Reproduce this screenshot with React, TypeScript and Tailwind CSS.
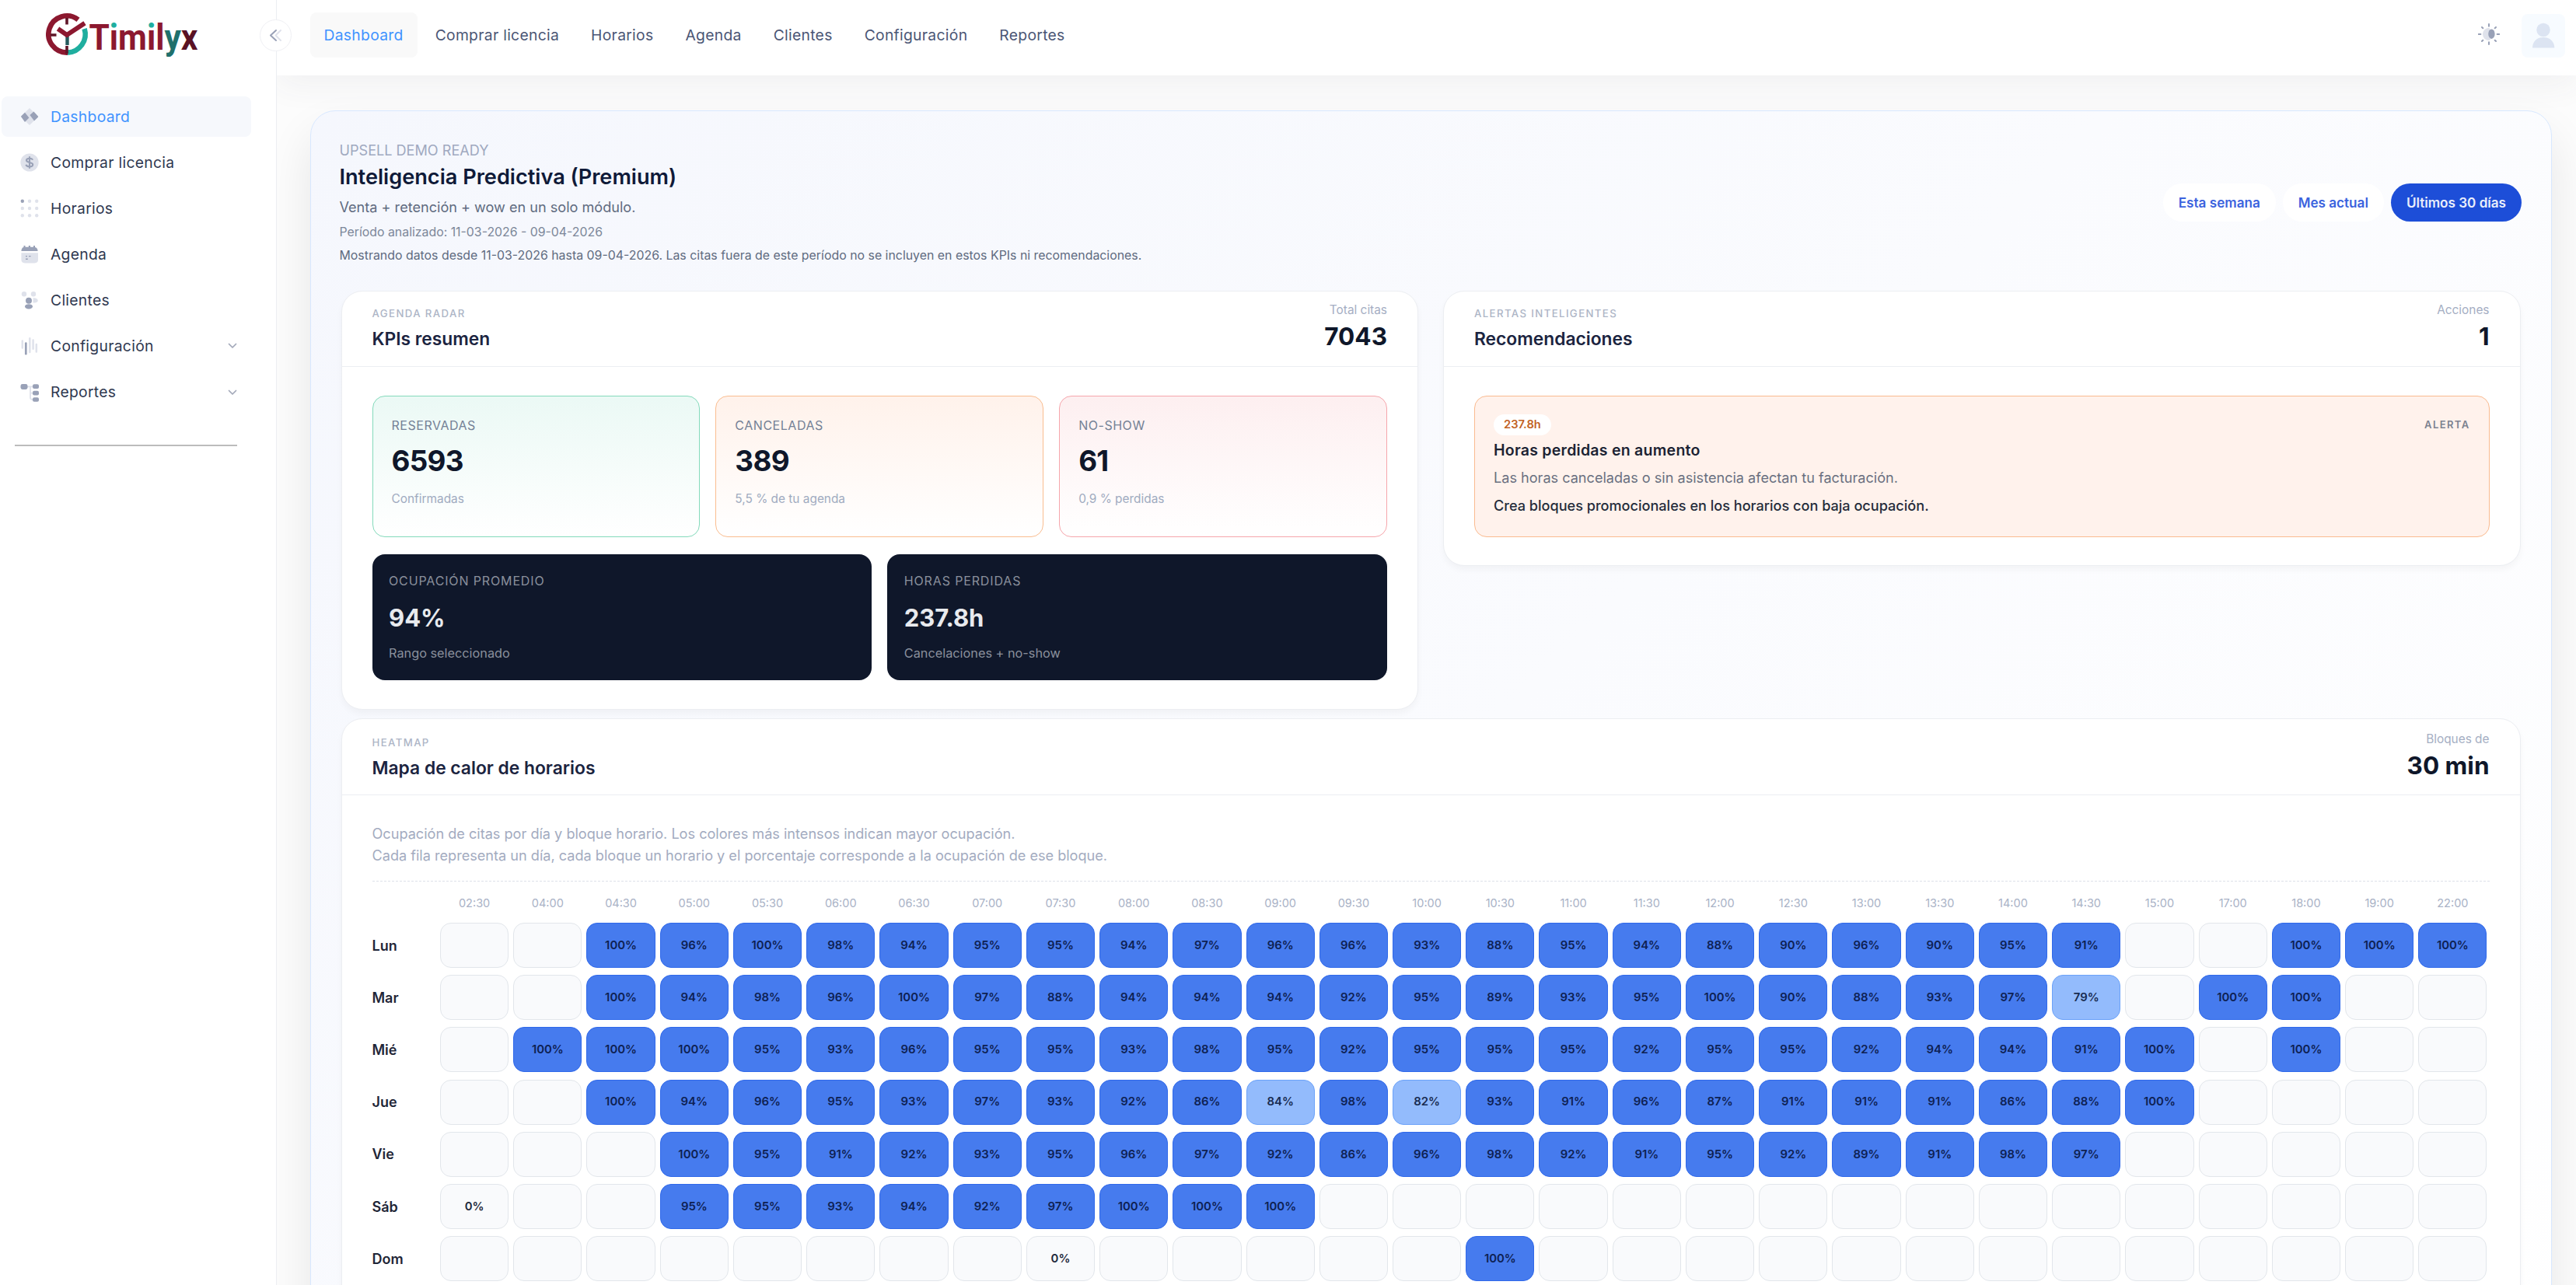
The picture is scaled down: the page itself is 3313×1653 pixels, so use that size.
import { ReactNode } from "react";
import clsx from "clsx";

const topNav = ["Dashboard", "Comprar licencia", "Horarios", "Agenda", "Clientes", "Configuración", "Reportes"];

const hours = [
  "02:30", "04:00", "04:30", "05:00", "05:30", "06:00", "06:30", "07:00", "07:30", "08:00",
  "08:30", "09:00", "09:30", "10:00", "10:30", "11:00", "11:30", "12:00", "12:30", "13:00",
  "13:30", "14:00", "14:30", "15:00", "17:00", "18:00", "19:00", "22:00",
];

// One entry per column in `hours`, null when there are no blocks that day
const _ = null;
const week: { day: string; values: (number | null)[] }[] = [
  { day: "Lun", values: [_, _, 100, 96, 100, 98, 94, 95, 95, 94, 97, 96, 96, 93, 88, 95, 94, 88, 90, 96, 90, 95, 91, _, _, 100, 100, 100] },
  { day: "Mar", values: [_, _, 100, 94, 98, 96, 100, 97, 88, 94, 94, 94, 92, 95, 89, 93, 95, 100, 90, 88, 93, 97, 79, _, 100, 100, _, _] },
  { day: "Mié", values: [_, 100, 100, 100, 95, 93, 96, 95, 95, 93, 98, 95, 92, 95, 95, 95, 92, 95, 95, 92, 94, 94, 91, 100, _, 100, _, _] },
  { day: "Jue", values: [_, _, 100, 94, 96, 95, 93, 97, 93, 92, 86, 84, 98, 82, 93, 91, 96, 87, 91, 91, 91, 86, 88, 100, _, _, _, _] },
  { day: "Vie", values: [_, _, _, 100, 95, 91, 92, 93, 95, 96, 97, 92, 86, 96, 98, 92, 91, 95, 92, 89, 91, 98, 97, _, _, _, _, _] },
  { day: "Sáb", values: [0, _, _, 95, 95, 93, 94, 92, 97, 100, 100, 100, _, _, _, _, _, _, _, _, _, _, _, _, _, _, _, _] },
  { day: "Dom", values: [_, _, _, _, _, _, _, _, 0, _, _, _, _, _, 100, _, _, _, _, _, _, _, _, _, _, _, _, _] },
];

const DARK = "#99a1b7";
const LIGHT = "#dfe2eb";

function Icon({ children }: { children: ReactNode }) {
  return (
    <svg viewBox="-12 -12 24 24" className="size-6 shrink-0">
      {children}
    </svg>
  );
}

const sideNav: { label: string; icon: ReactNode; expandable?: boolean }[] = [
  {
    label: "Dashboard",
    icon: (
      <Icon>
        <path d="M0 -11L11.3 0L0 11L-11.3 0Z" fill={LIGHT} />
        <path d="M-10.6 .6Q-11.3 0 -10.6 -.8L-6 -5.3L-.6 1.6L-6 7L-10.6 .6Z" fill={DARK} />
        <path d="M.4 -2L5.4 -6.6L10.9 -.6Q11.4 0 10.9 .7L6 5.6Z" fill={DARK} />
      </Icon>
    ),
  },
  {
    label: "Comprar licencia",
    icon: (
      <Icon>
        <circle r="11.6" fill={LIGHT} />
        <path d="M4 -3.2C3.6 -4.8 2 -5.3 0 -5.3C-2.4 -5.3 -4 -4.3 -4 -2.7C-4 .6 4.2 -.8 4.2 2.7C4.2 4.4 2.4 5.3 0 5.3C-2.4 5.3 -4.2 4.5 -4.5 2.8M0 -7.8V7.8" fill="none" stroke={DARK} strokeWidth="2.1" />
      </Icon>
    ),
  },
  {
    label: "Horarios",
    icon: (
      <Icon>
        {[-9.2, 0, 9.2].map((y) =>
          [-9.2, 0, 9.2].map((x) => (
            <circle key={`${x}${y}`} cx={x} cy={y} r="2.2" fill={x < 0 && y < 0 ? DARK : LIGHT} />
          ))
        )}
      </Icon>
    ),
  },
  {
    label: "Agenda",
    icon: (
      <Icon>
        <path d="M-10.6 -1.8H11V7Q11 11.4 6.5 11.4H-6Q-10.6 11.4 -10.6 7Z" fill={LIGHT} />
        <path d="M-10.6 -4C-10.6 -7 -9 -9 -7.5 -9V-11H-5.5V-9.3H-1.2V-11H1V-9.3H5V-11H7V-9C9 -8.6 10.6 -7 10.6 -4Z" fill={DARK} />
        <path d="M-5 2.6H-3M-1 2.6H1.6M-5 6.2H-2.2" stroke={DARK} strokeWidth="1.4" />
      </Icon>
    ),
  },
  {
    label: "Clientes",
    icon: (
      <Icon>
        <circle cx="-7" cy="-7.7" r="3.2" fill={LIGHT} />
        <circle cx="5" cy="-7.7" r="3.2" fill={LIGHT} />
        <path d="M4.5 -2.6C8 -3 10.6 -1.6 10.8 .8C10.4 3 8 4 4.5 3.4Z" fill={LIGHT} />
        <circle cx="-1" cy=".7" r="4" fill={DARK} />
        <ellipse cx="-1" cy="8.3" rx="5" ry="3.1" fill={DARK} />
      </Icon>
    ),
  },
  {
    label: "Configuración",
    expandable: true,
    icon: (
      <Icon>
        <path d="M-9.2 -6.5V2.5M.3 -9.8V8M4.6 -7.6V3.8M8.8 -2V7.5" stroke={LIGHT} strokeWidth="2.5" strokeLinecap="round" />
        <path d="M-4.7 -3.4V10.2" stroke={DARK} strokeWidth="2.7" strokeLinecap="round" />
      </Icon>
    ),
  },
  {
    label: "Reportes",
    expandable: true,
    icon: (
      <Icon>
        <path d="M-3 -7.6H5M1 -7.6V6.5Q1 9 4 9M1 .7H5" fill="none" stroke={LIGHT} strokeWidth="1.8" />
        <rect x="-11.5" y="-11" width="9" height="7" rx="2.4" fill={DARK} />
        <rect x="4" y="-10.8" width="8" height="5.8" rx="2" fill={DARK} />
        <rect x="4" y="-2.2" width="8" height="5.8" rx="2" fill={DARK} />
        <rect x="4" y="6.2" width="8" height="5.6" rx="2" fill={DARK} />
      </Icon>
    ),
  },
];

function Logo() {
  return (
    <svg viewBox="0 0 200 62" className="h-[62px] w-[200px]">
      <defs>
        <linearGradient id="dot" gradientUnits="userSpaceOnUse" x1="0" y1="0" x2="0" y2="62">
          <stop offset="0.36" stopColor="#1fae9f" />
          <stop offset="0.36" stopColor="#8c182f" />
        </linearGradient>
      </defs>
      <path d="M28 52.600A23.600 23.600 0 1 1 41.500 10.400" fill="none" stroke="#8c182f" strokeWidth="6.6" />
      <path d="M49.600 22A23.600 23.600 0 0 1 28 52.600" fill="none" stroke="#1fae9f" strokeWidth="6.6" />
      <path d="M27 8V16.500M6 30H13.500M27 44V54" stroke="#5f1628" strokeWidth="3.6" />
      <path d="M27.500 31V43" stroke="#245a5c" strokeWidth="4.4" />
      <path d="M15.500 22L27 30L50 14.800" fill="none" stroke="#8c182f" strokeWidth="6" />
      <text x="55.500" y="49" textLength="140" lengthAdjust="spacingAndGlyphs" fontFamily="Roboto" fontWeight="700" fontSize="46.800" fill="#8c182f">
        T<tspan fill="url(#dot)">i</tspan>m<tspan fill="url(#dot)">i</tspan>l<tspan fill="#1f706c">y</tspan><tspan fill="#5a1224">x</tspan>
      </text>
    </svg>
  );
}

function Sidebar() {
  return (
    <aside className="relative z-20 flex w-[356px] shrink-0 flex-col border-r border-[#eceef2] bg-white">
      <div className="flex h-[124px] pt-[15px] pl-[59px]">
        <Logo />
      </div>
      <button className="absolute top-[25px] right-[-20px] flex size-[41px] items-center justify-center rounded-full border border-[#eff0f4] bg-white">
        <svg viewBox="0 0 20 20" className="size-5" fill="none" strokeWidth="2" strokeLinecap="round" strokeLinejoin="round">
          <path d="M16 3L9.500 9.500L16 16" stroke="#dfe2eb" />
          <path d="M10 3L3 9.500L10 16" stroke={DARK} />
        </svg>
      </button>
      <nav className="flex flex-col gap-[7.100px] pl-[2px]">
        {sideNav.map((item, i) => (
          <a
            key={item.label}
            className={clsx(
              "flex h-[52px] w-[321px] items-center rounded-lg pl-[24px] text-[19.300px] tracking-[0.300px]",
              i === 0 ? "bg-[#f6f8fc] text-[#3f93ff]" : "text-[#2f3850]"
            )}
          >
            {item.icon}
            <span className="ml-[15px]">{item.label}</span>
            {item.expandable && (
              <svg viewBox="0 0 12 8" className="mr-[18px] ml-auto h-2 w-3" fill="none" stroke="#a2a8b9" strokeWidth="1.700" strokeLinecap="round" strokeLinejoin="round">
                <path d="M1.500 1.500L6 6L10.500 1.500" />
              </svg>
            )}
          </a>
        ))}
      </nav>
      <div className="mt-[41px] ml-[19px] h-[2px] w-[286px] bg-[#bcbcbc]" />
    </aside>
  );
}

function Topbar() {
  return (
    <header className="relative z-10 flex h-[97px] shrink-0 items-start bg-white pl-[42.500px] shadow-[0_13px_40px_rgba(70,60,90,0.06)]">
      <nav className="flex gap-[5px] pt-[16px]">
        {topNav.map((label, i) => (
          <a
            key={label}
            className={clsx(
              "flex h-[58px] items-center rounded-lg px-[18px] text-[19.300px] tracking-[0.300px]",
              i === 0 ? "bg-[#f9f9f9] text-[#3f93ff]" : "text-[#4b5675]"
            )}
          >
            {label}
          </a>
        ))}
      </nav>
      <div className="mr-[14px] ml-auto flex pt-[18px]">
        <svg viewBox="-14 -14 28 28" className="mt-[12px] mr-[28px] size-7">
          <path d="M0 -8A8 8 0 1 0 0 8Q3 7 3 0Q3 -7 0 -8Z" fill={LIGHT} />
          <ellipse cx="3.400" cy="-.3" rx="4.200" ry="6.200" fill={DARK} />
          <path d="M0 -13V-10.300M0 10.300V13M-13.400 0H-10.600M10.600 0H13.400M-9 -9L-7.700 -7.700M7.700 -7.700L9 -9M-9 9L-7.700 7.700M7.700 7.700L9 9" stroke={DARK} strokeWidth="2" strokeLinecap="round" />
        </svg>
        <div className="flex size-[56px] items-center justify-center rounded-lg bg-[#f7fbff]">
          <svg viewBox="0 0 56 56" className="size-14" fill="#dce4f2">
            <circle cx="28" cy="20.500" r="8.700" />
            <path d="M14 43.500C14 36 19 30 28 30S42.300 36 42.300 43.500Z" />
          </svg>
        </div>
      </div>
    </header>
  );
}

interface CardProps {
  eyebrow: string;
  title: string;
  metaLabel: string;
  metaValue: string;
  className?: string;
  headerClassName?: string;
  children: ReactNode;
}

function Card({ eyebrow, title, metaLabel, metaValue, className, headerClassName = "h-[97px]", children }: CardProps) {
  return (
    <section className={clsx("rounded-[27px] border border-[#eceef2] bg-white shadow-[0_5px_8px_rgba(15,23,42,0.035)]", className)}>
      <div className={clsx("flex justify-between border-b border-[#eceef2] px-[39px]", headerClassName)}>
        <div className="pt-[18px]">
          <p className="text-[13.200px] leading-[20px] font-medium tracking-[1.400px] text-[#adb5c6] uppercase">{eyebrow}</p>
          <h3 className="text-[22.800px] leading-[45px] font-semibold text-[#1b2440]">{title}</h3>
        </div>
        <div className="pt-[12px] text-right">
          <p className="text-[15.400px] leading-[24px] text-[#a5aec3]">{metaLabel}</p>
          <p className="text-[31.500px] leading-[44px] font-bold text-[#0f172a]">{metaValue}</p>
        </div>
      </div>
      {children}
    </section>
  );
}

const kpis = [
  { label: "Reservadas", value: "6593", hint: "Confirmadas", tone: "border-[#84dabb] from-[#ebf9f5]" },
  { label: "Canceladas", value: "389", hint: "5,5 % de tu agenda", tone: "border-[#fabd90] from-[#fff2eb]" },
  { label: "No-show", value: "61", hint: "0,9 % perdidas", tone: "border-[#f6a6ac] from-[#fdeff0]" },
];

const totals = [
  { label: "Ocupación promedio", value: "94%", hint: "Rango seleccionado" },
  { label: "Horas perdidas", value: "237.8h", hint: "Cancelaciones + no-show" },
];

function KpiCard() {
  return (
    <Card eyebrow="Agenda radar" title="KPIs resumen" metaLabel="Total citas" metaValue="7043" className="h-[539px]">
      <div className="px-[39px] pt-[37px]">
        <div className="grid grid-cols-3 gap-[20px]">
          {kpis.map((k) => (
            <div key={k.label} className={clsx("h-[182px] rounded-2xl border bg-linear-to-b to-white px-[24px] pt-[24px]", k.tone)}>
              <p className="text-[16px] leading-[26px] tracking-[0.530px] text-[#748196] uppercase">{k.label}</p>
              <p className="text-[36.800px] leading-[66px] font-bold tracking-[-0.700px] text-[#0f172a]">{k.value}</p>
              <p className="text-[15.400px] leading-[31px] text-[#a0abc0]">{k.hint}</p>
            </div>
          ))}
        </div>
        <div className="mt-[22px] grid grid-cols-2 gap-[20px]">
          {totals.map((t) => (
            <div key={t.label} className="h-[162px] rounded-2xl bg-[#0f172a] px-[21.500px] pt-[21px]">
              <p className="text-[16px] leading-[26px] tracking-[0.860px] text-[#8a909c] uppercase">{t.label}</p>
              <p className="text-[31px] leading-[69px] font-bold text-[#e8eaee]">{t.value}</p>
              <p className="text-[16.300px] leading-[22px] text-[#8a909c]">{t.hint}</p>
            </div>
          ))}
        </div>
      </div>
    </Card>
  );
}

function AlertsCard() {
  return (
    <Card eyebrow="Alertas inteligentes" title="Recomendaciones" metaLabel="Acciones" metaValue="1" className="h-[354px]">
      <div className="px-[39px] pt-[37px]">
        <div className="h-[182px] rounded-2xl border border-[#fabb90] bg-[#fff2ec] px-[24px] pt-[23px]">
          <div className="flex items-center justify-between">
            <span className="flex h-[27px] items-center rounded-full bg-white px-[13px] text-[14.700px] font-semibold text-[#c2621f]">
              237.8h
            </span>
            <span className="text-[13px] font-semibold tracking-[1.400px] text-[#7c8290] uppercase">Alerta</span>
          </div>
          <p className="text-[19.500px] leading-[39px] font-semibold tracking-[0.260px] text-[#1c2333]">Horas perdidas en aumento</p>
          <p className="text-[18.100px] leading-[30px] text-[#6a7080]">Las horas canceladas o sin asistencia afectan tu facturación.</p>
          <p className="text-[18.100px] leading-[43px] font-medium text-[#252c3b]">Crea bloques promocionales en los horarios con baja ocupación.</p>
        </div>
      </div>
    </Card>
  );
}

function cellTone(value: number | null) {
  if (value === null || value === 0) return "border-[#e2e6eb] bg-[#f9fafc] text-[#1e293b]";
  if (value < 85) return "border-[#6ba2f9] bg-[#93bbfc] text-[#182b50]";
  return "border-[#3069ea] bg-[#467bee] text-[#0e2152]";
}

function HeatmapCard() {
  return (
    <Card eyebrow="Heatmap" title="Mapa de calor de horarios" metaLabel="Bloques de" metaValue="30 min" className="mt-[10.500px] h-[900px]" headerClassName="h-[98px] pt-[2.500px]">
      <div className="px-[39px] pt-[35px]">
        <div className="border-b border-dashed border-[#dde1e8] pb-[19px] text-[18.130px] leading-[28px] text-[#a3abc0]">
          <p>Ocupación de citas por día y bloque horario. Los colores más intensos indican mayor ocupación.</p>
          <p>Cada fila representa un día, cada bloque un horario y el porcentaje corresponde a la ocupación de ese bloque.</p>
        </div>
        <div className="grid grid-cols-[84.500px_repeat(28,1fr)] pt-[7px] text-center text-[14.500px] leading-[42px] text-[#a9b2c6]">
          <span />
          {hours.map((h) => (
            <span key={h}>{h}</span>
          ))}
        </div>
        {week.map((row) => (
          <div key={row.day} className="grid h-[67.200px] grid-cols-[84.500px_repeat(28,1fr)] items-center">
            <span className="text-[18px] font-semibold text-[#1f2637]">{row.day}</span>
            {row.values.map((v, i) => (
              <div
                key={hours[i]}
                className={clsx("mx-[3px] flex h-[58px] items-center justify-center rounded-[14px] border text-[14.900px] font-semibold", cellTone(v))}
              >
                {v !== null && `${v}%`}
              </div>
            ))}
          </div>
        ))}
      </div>
    </Card>
  );
}

const ranges = ["Esta semana", "Mes actual", "Últimos 30 días"];

export default function App() {
  return (
    <div className="flex h-screen w-full overflow-hidden bg-[#fcfcfc] font-['Inter',sans-serif]">
      <Sidebar />
      <div className="flex min-w-0 flex-1 flex-col">
        <Topbar />
        <main className="pt-[45px] pr-[31px] pl-[43px]">
          <div className="h-[1750px] rounded-[32px] border border-[#d8e8ff] bg-linear-[135deg] from-[#f5f7fd] to-[#ffffff] pt-[38px] pr-[38px] pl-[36.500px] shadow-[0_30px_60px_rgba(0,0,0,0.090)]">
            <div className="flex items-center justify-between">
              <div>
                <p className="text-[18.100px] leading-[24px] text-[#a0a9c0]">UPSELL DEMO READY</p>
                <h2 className="text-[27.150px] leading-[45px] font-semibold text-[#0f1a38]">Inteligencia Predictiva (Premium)</h2>
                <p className="text-[18.100px] leading-[33px] text-[#5f6b80]">Venta + retención + wow en un solo módulo.</p>
                <p className="text-[15.850px] leading-[31px] text-[#7c8799]">Período analizado: 11-03-2026 - 09-04-2026</p>
                <p className="text-[15.880px] leading-[30px] text-[#5f6b80]">
                  Mostrando datos desde 11-03-2026 hasta 09-04-2026. Las citas fuera de este período no se incluyen en estos KPIs ni recomendaciones.
                </p>
              </div>
              <div className="mb-[4px] flex gap-[9px]">
                {ranges.map((r, i) => (
                  <button
                    key={r}
                    className={clsx(
                      "h-[49px] rounded-full px-[20px] text-[17.100px] font-semibold",
                      i === 2 ? "bg-[#1d4ed8] text-[#e9eefb]" : "bg-white text-[#3b63de]"
                    )}
                  >
                    {r}
                  </button>
                ))}
              </div>
            </div>
            <div className="mr-[1.500px] ml-[2px]">
              <div className="mt-[30px] grid grid-cols-2 items-start gap-[32px]">
                <KpiCard />
                <AlertsCard />
              </div>
              <HeatmapCard />
            </div>
          </div>
        </main>
      </div>
    </div>
  );
}
